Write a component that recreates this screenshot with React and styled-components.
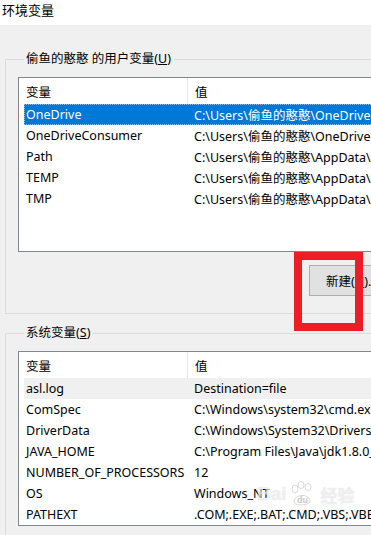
import React from "react";
import styled, { createGlobalStyle } from "styled-components";

const GlobalStyle = createGlobalStyle`
  html, body {
    margin: 0;
    padding: 0;
    background: #f0f0f0;
  }
  body {
    font-family: "Noto Sans", "Noto Sans CJK SC", sans-serif;
    font-size: 12.5px;
    color: #000;
  }
`;

const Window = styled.div`
  position: relative;
  width: 371px;
  height: 535px;
  overflow: hidden;
  background: #f0f0f0;
`;

const TitleBar = styled.div`
  height: 25px;
  background: #fff;
  padding-left: 2px;
  font-size: 13px;
  line-height: 20px;
`;

const Body = styled.div`
  padding: 26px 0 0 5px;
`;

const Group = styled.fieldset`
  margin: 0 0 ${(p) => p.$gap || 0}px 0;
  padding: 10px 0 17px 12px;
  border: 1px solid #dcdcdc;
  border-right: none;
  min-width: 0;

  legend {
    margin-left: 6px;
    padding: 0 3px 0 2px;
    line-height: 16px;
  }
`;

const ListBox = styled.div`
  width: 400px;
  height: ${(p) => p.$height}px;
  background: #fff;
  border: 1px solid #828790;
  box-sizing: border-box;
`;

const Header = styled.div`
  display: flex;
  height: 26px;
  align-items: center;
`;

const HeaderCell = styled.div`
  width: ${(p) => (p.$first ? "161px" : "auto")};
  padding-left: 7px;
  height: 100%;
  display: flex;
  align-items: center;
  border-right: ${(p) => (p.$first ? "1px solid #e5e5e5" : "none")};
`;

const Row = styled.div`
  display: flex;
  height: 21px;
  align-items: center;
  margin-left: 5px;
  white-space: nowrap;
  box-sizing: border-box;
  background: ${(p) => (p.$selected ? "#0078d7" : p.$hover ? "#f0f0f0" : "transparent")};
  color: ${(p) => (p.$selected ? "#fff" : "#000")};
  outline: ${(p) => (p.$selected ? "1px dotted #8cc1ec" : "none")};
  outline-offset: -1px;
`;

const NameCell = styled.div`
  width: 161px;
  padding-left: 2px;
  flex-shrink: 0;
`;

const ValueCell = styled.div`
  padding-left: 7px;
`;

const ButtonBar = styled.div`
  display: flex;
  padding: 13px 0 0 291px;
`;

const Button = styled.button`
  flex-shrink: 0;
  width: 88px;
  height: 31px;
  background: #e1e1e1;
  border: 1px solid #adadad;
  font: inherit;
  color: #000;
  text-align: left;
  padding: 0 0 0 16px;
  white-space: nowrap;
`;

const RedMark = styled.div`
  position: absolute;
  left: 294px;
  top: 252px;
  width: 69px;
  height: 79px;
  box-sizing: border-box;
  border: 8px solid #ee1c25;
`;

const Watermark = styled.div`
  position: absolute;
  left: 257px;
  top: 481px;
  display: flex;
  align-items: center;
  gap: 2px;
  font-family: "Liberation Sans", "Noto Sans CJK SC", sans-serif;
  font-weight: bold;
  font-size: 19px;
  color: rgba(255, 255, 255, 0.55);
  text-shadow: 0 0 1px rgba(170, 170, 170, 0.45);
  pointer-events: none;

  span.cn {
    font-size: 17px;
    margin-left: 4px;
  }
`;

const userVars = [
  ["OneDrive", "C:\\Users\\偷鱼的憨憨\\OneDrive"],
  ["OneDriveConsumer", "C:\\Users\\偷鱼的憨憨\\OneDrive"],
  ["Path", "C:\\Users\\偷鱼的憨憨\\AppData\\Local\\Microsoft"],
  ["TEMP", "C:\\Users\\偷鱼的憨憨\\AppData\\Local\\Temp"],
  ["TMP", "C:\\Users\\偷鱼的憨憨\\AppData\\Local\\Temp"],
];

const sysVars = [
  ["asl.log", "Destination=file"],
  ["ComSpec", "C:\\Windows\\system32\\cmd.exe"],
  ["DriverData", "C:\\Windows\\System32\\Drivers\\DriverData"],
  ["JAVA_HOME", "C:\\Program Files\\Java\\jdk1.8.0_201"],
  ["NUMBER_OF_PROCESSORS", "12"],
  ["OS", "Windows_NT"],
  ["PATHEXT", ".COM;.EXE;.BAT;.CMD;.VBS;.VBE;.JS"],
];

const VarList = ({ rows, height, selected, hover }) => (
  <ListBox $height={height}>
    <Header>
      <HeaderCell $first>变量</HeaderCell>
      <HeaderCell>值</HeaderCell>
    </Header>
    {rows.map(([name, value], i) => (
      <Row key={name} $selected={i === selected} $hover={i === hover}>
        <NameCell>{name}</NameCell>
        <ValueCell>{value}</ValueCell>
      </Row>
    ))}
  </ListBox>
);

const Paw = () => (
  <svg width="26" height="26" viewBox="0 0 26 26">
    <g fill="rgba(255,255,255,0.55)" stroke="rgba(170,170,170,0.45)" strokeWidth="1">
      <ellipse cx="6" cy="8" rx="3" ry="4" />
      <ellipse cx="12" cy="4" rx="3" ry="3.5" />
      <ellipse cx="19" cy="6" rx="3" ry="3.5" />
      <path d="M5 21 C5 13 20 12 21 20 C21 25 5 25 5 21 Z" />
    </g>
    <text x="8" y="22" fontSize="9" fill="rgba(170,170,170,0.55)" fontFamily="Liberation Sans, sans-serif" fontWeight="bold">du</text>
  </svg>
);

export default function App() {
  return (
    <Window>
      <GlobalStyle />
      <TitleBar>环境变量</TitleBar>
      <Body>
        <Group $gap={11}>
          <legend>偷鱼的憨憨 的用户变量(<u>U</u>)</legend>
          <VarList rows={userVars} height={175} selected={0} />
          <ButtonBar>
            <Button>新建(<u>N</u>)...</Button>
          </ButtonBar>
        </Group>
        <Group>
          <legend>系统变量(<u>S</u>)</legend>
          <VarList rows={sysVars} height={175} hover={0} />
        </Group>
      </Body>
      <RedMark />
      <Watermark>
        <span>Bai</span>
        <Paw />
        <span className="cn">经验</span>
      </Watermark>
    </Window>
  );
}
